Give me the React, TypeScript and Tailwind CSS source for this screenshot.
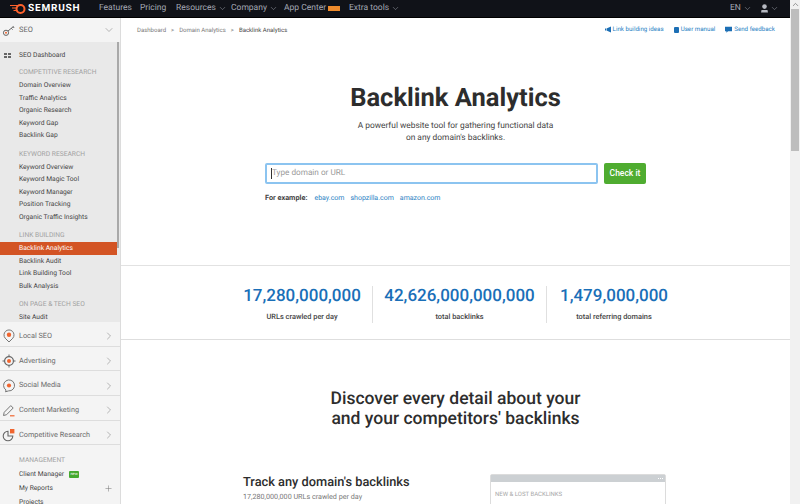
import { ChevronDown, ChevronRight, ChevronUp, Plus } from "lucide-react";

const font = "font-['Roboto','Noto_Sans',sans-serif]";

const groups = [
  {
    title: "COMPETITIVE RESEARCH",
    items: ["Domain Overview", "Traffic Analytics", "Organic Research", "Keyword Gap", "Backlink Gap"],
  },
  {
    title: "KEYWORD RESEARCH",
    items: ["Keyword Overview", "Keyword Magic Tool", "Keyword Manager", "Position Tracking", "Organic Traffic Insights"],
  },
  {
    title: "LINK BUILDING",
    items: ["Backlink Analytics", "Backlink Audit", "Link Building Tool", "Bulk Analysis"],
  },
  { title: "ON PAGE & TECH SEO", items: ["Site Audit"] },
];

function PinIcon() {
  return (
    <svg width="14" height="14" viewBox="0 0 14 14" fill="none">
      <path d="M7 13 3.2 9.2a5 5 0 1 1 7.6 0Z" stroke="#777" strokeWidth="1" />
      <circle cx="7" cy="5.8" r="2.2" fill="#f0652f" />
    </svg>
  );
}

function TargetIcon() {
  return (
    <svg width="14" height="14" viewBox="0 0 14 14" fill="none">
      <circle cx="7" cy="7" r="4.4" stroke="#666" strokeWidth="1.2" />
      <circle cx="7" cy="7" r="2" fill="#f0652f" />
      <path d="M7 .5v2M7 11.5v2M.5 7h2M11.5 7h2" stroke="#666" />
    </svg>
  );
}

function BubbleIcon() {
  return (
    <svg width="14" height="14" viewBox="0 0 14 14" fill="none">
      <path d="M3.5 12.8 4 11a5.5 5.5 0 1 1 2.5.9Z" stroke="#777" />
      <circle cx="7" cy="6.5" r="2.1" fill="#f0652f" />
    </svg>
  );
}

function PenIcon() {
  return (
    <svg width="14" height="14" viewBox="0 0 14 14" fill="none">
      <path d="M1.5 12.5 2.2 9.3 8.8 2.6l2.4 2.4-6.6 6.7Z" stroke="#777" />
      <path d="M8 12.8h4.5" stroke="#f0652f" strokeWidth="1.2" />
    </svg>
  );
}

function PieIcon() {
  return (
    <svg width="14" height="14" viewBox="0 0 14 14" fill="none">
      <path d="M6 3.2a4.8 4.8 0 1 0 4.8 4.8H6Z" stroke="#666" strokeWidth="1.1" />
      <path d="M8 1h4.4v4.4H8Z" fill="#f0652f" />
    </svg>
  );
}

function KeyIcon() {
  return (
    <svg width="14" height="14" viewBox="0 0 14 14" fill="none">
      <circle cx="4" cy="9.8" r="2.6" stroke="#666" />
      <circle cx="4" cy="9.8" r="1" fill="#f0652f" />
      <path d="m6 8 5.6-4.6M9.2 5.2l1.4 1.4M11 3.7l1.2 1.3" stroke="#666" />
    </svg>
  );
}

const sections = [
  { label: "Local SEO", icon: <PinIcon /> },
  { label: "Advertising", icon: <TargetIcon /> },
  { label: "Social Media", icon: <BubbleIcon /> },
  { label: "Content Marketing", icon: <PenIcon /> },
  { label: "Competitive Research", icon: <PieIcon /> },
];

const stats = [
  { value: "17,280,000,000", label: "URLs crawled per day", width: "w-[140px]" },
  { value: "42,626,000,000,000", label: "total backlinks", width: "w-[175px] border-x border-[#e0e0e0]" },
  { value: "1,479,000,000", label: "total referring domains", width: "w-[134px]" },
];

function Sidebar() {
  return (
    <aside className="flex h-[486px] w-[121px] shrink-0 flex-col overflow-hidden border-r border-[#dcdcdc] bg-[#f4f4f4] text-[6.7px] text-[#555]">
      <div className="flex h-6 shrink-0 items-center pl-[2px] pr-[5px] text-[7.5px] text-[#666]">
        <KeyIcon />
        <span className="ml-[3px]">SEO</span>
        <ChevronDown className="ml-auto text-[#888]" size={12} strokeWidth={1.2} />
      </div>
      <div className="relative h-[280px] shrink-0 overflow-hidden bg-[#e9e9e9] pr-[3px]">
        <div className="flex h-[24px] items-center pl-1 pt-[3px] text-[#444]">
          <span className="grid w-[15px] grid-cols-[3px_3px] gap-[1px]">
            <i className="h-[2px] bg-[#666]" />
            <i className="h-[2px] bg-[#666]" />
            <i className="h-[2px] bg-[#666]" />
            <i className="h-[2px] bg-[#666]" />
          </span>
          SEO Dashboard
        </div>
        {groups.map((group) => (
          <div key={group.title} className="mb-[6px]">
            <div className="flex h-[13px] items-center pl-[19px] text-[#a2a2a2]">{group.title}</div>
            {group.items.map((item) => (
              <div
                key={item}
                className={`flex h-[12.5px] items-center pl-[19px] ${
                  item === "Backlink Analytics" ? "bg-[#d35424] text-white" : "text-[#444]"
                }`}
              >
                {item}
              </div>
            ))}
          </div>
        ))}
        <div className="absolute right-[1px] top-0 h-[206px] w-[2px] bg-[#a9a9a9]" />
      </div>
      {sections.map((section) => (
        <div key={section.label} className="flex h-[24.7px] shrink-0 items-center border-b border-[#dddddd] pl-[1px] pr-[5px] pt-[5px] text-[7.3px] text-[#6b6b6b]">
          <span className="w-[18px] pl-[1px]">{section.icon}</span>
          {section.label}
          <ChevronRight className="ml-auto text-[#888]" size={12} strokeWidth={1.2} />
        </div>
      ))}
      <div className="mt-[8px] flex h-[14px] shrink-0 items-center pl-[19px] text-[#a2a2a2]">MANAGEMENT</div>
      <div className="flex h-[14px] shrink-0 items-center gap-[5px] pl-[19px] text-[#444]">
        Client Manager
        <span className="flex h-[7px] w-[10px] items-center justify-center rounded-[1px] bg-[#45a92f] text-[4px] text-white">new</span>
      </div>
      <div className="flex h-[14px] shrink-0 items-center justify-between pl-[19px] pr-[7px] text-[#444]">
        My Reports
        <Plus className="text-[#777]" size={9} strokeWidth={1.4} />
      </div>
      <div className="flex h-[14px] shrink-0 items-center pl-[19px] text-[#444]">Projects</div>
    </aside>
  );
}

function TopBar() {
  return (
    <header className="flex h-[18px] w-[790px] shrink-0 items-center border-b border-black bg-[#101218] pl-[10px] text-[8.5px] text-[#a5a9b5]">
      <svg width="16" height="10" viewBox="0 0 16 10" className="shrink-0">
        <path d="M0 1.5h8M2 4h5M3.5 6.5h4" stroke="#ff622d" strokeWidth="1.2" />
        <circle cx="10.5" cy="5" r="4" fill="none" stroke="#ff622d" strokeWidth="2" />
      </svg>
      <span className="ml-[2px] w-[71px] text-[10px] font-bold tracking-[0.8px] text-white">SEMRUSH</span>
      <span className="w-[41px]">Features</span>
      <span className="w-[36px]">Pricing</span>
      <span className="flex w-[55px] items-center">Resources<ChevronDown size={9} strokeWidth={1.3} className="ml-[2px]" /></span>
      <span className="flex w-[53px] items-center">Company<ChevronDown size={9} strokeWidth={1.3} className="ml-[2px]" /></span>
      <span className="flex w-[65px] items-center">App Center<i className="ml-[2px] h-[5px] w-[12px] bg-[#ee8b2c]" /></span>
      <span className="flex items-center">Extra tools<ChevronDown size={9} strokeWidth={1.3} className="ml-[2px]" /></span>
      <span className="ml-auto flex w-[30px] items-center">EN<ChevronDown size={9} strokeWidth={1.3} className="ml-[2px]" /></span>
      <span className="mr-[11px] flex items-center">
        <svg width="9" height="9" viewBox="0 0 9 9" fill="#b5b8c0">
          <circle cx="4.5" cy="2.6" r="2.3" />
          <path d="M1 8.5 1.5 6h6L8 8.5Z" />
        </svg>
        <ChevronDown size={9} strokeWidth={1.3} className="ml-[1px]" />
      </span>
    </header>
  );
}

function Main() {
  return (
    <main className="flex min-w-0 flex-1 flex-col overflow-hidden bg-white">
      <div className="flex h-6 shrink-0 items-center justify-between pl-4 pr-[15px]">
        <div className="flex items-center gap-[5px] text-[6px] text-[#777]">
          <span>Dashboard</span>
          <span>&gt;</span>
          <span>Domain Analytics</span>
          <span>&gt;</span>
          <span className="text-[#444]">Backlink Analytics</span>
        </div>
        <div className="flex items-center gap-[10px] text-[6.2px] text-[#2a82c4]">
          <span className="flex items-center gap-[1px]">
            <svg width="7" height="7" viewBox="0 0 7 7" fill="#1c6fb5"><path d="M0 2.5h1v2H0Zm1.5 0L6 .5v6L1.5 4.5Z" /></svg>
            Link building ideas
          </span>
          <span className="flex items-center gap-[2px]">
            <i className="h-[6px] w-[5px] rounded-[1px] bg-[#1c6fb5]" />
            User manual
          </span>
          <span className="flex items-center gap-[2px]">
            <svg width="7" height="7" viewBox="0 0 7 7" fill="#1c6fb5"><path d="M0 .8h7v4.4H3L1.4 6.8V5.2H0Z" /></svg>
            Send feedback
          </span>
        </div>
      </div>

      <section className="flex h-[224px] shrink-0 flex-col items-center border-b border-[#e2e2e2] pt-[39px]">
        <h1 className="text-[25.5px] font-bold leading-[34px] text-[#2d2d2d]">Backlink Analytics</h1>
        <p className="mt-[5px] text-center text-[8.4px] leading-[12px] text-[#444]">
          A powerful website tool for gathering functional data
          <br />
          on any domain's backlinks.
        </p>
        <div className="mt-[19px] flex w-[381px] gap-[6px]">
          <div className="flex h-[21px] flex-1 items-center rounded-[2px] border-2 border-[#8cc4f0] pl-[4px] text-[8.2px] text-[#999]">
            <i className="h-[11px] w-px bg-[#333]" />
            Type domain or URL
          </div>
          <button type="button" className="h-[21px] w-[42px] rounded-[2px] bg-[#4fac30] text-[8.5px] font-medium text-white">Check it</button>
        </div>
        <div className="mt-[9px] flex w-[381px] gap-[6px] text-[7px] text-[#2a82c4]">
          <span className="mr-[1px] text-[7.3px] font-bold text-[#444]">For example:</span>
          <span>ebay.com</span>
          <span>shopzilla.com</span>
          <span>amazon.com</span>
        </div>
      </section>

      <section className="flex h-[74px] shrink-0 items-start justify-center border-b border-[#dedede] pl-[2px] pt-5">
        {stats.map((stat) => (
          <div key={stat.label} className={`flex h-[37px] flex-col items-center ${stat.width}`}>
            <span className="text-[17px] font-medium leading-5 text-[#1a6fb8]">{stat.value}</span>
            <span className="mt-[6px] text-[7.4px] font-medium leading-[10px] text-[#444]">{stat.label}</span>
          </div>
        ))}
      </section>

      <h2 className="mt-[49px] shrink-0 text-center text-[17.5px] font-medium leading-[20px] text-[#2d2d2d]">
        Discover every detail about your
        <br />
        and your competitors' backlinks
      </h2>

      <section className="mt-[45px] flex shrink-0 pl-[122px]">
        <div className="w-[247px] pt-[2px]">
          <h3 className="text-[12.8px] font-medium leading-[14px] text-[#2d2d2d]">Track any domain's backlinks</h3>
          <p className="mt-[2px] text-[7.2px] leading-[10px] text-[#777]">17,280,000,000 URLs crawled per day</p>
        </div>
        <div className="h-[60px] w-[176px] rounded-[2px] border border-[#dcdcdc]">
          <div className="flex h-[7px] items-center justify-end gap-px bg-[#ccd0d3] pr-[2px]">
            <i className="size-px bg-white" />
            <i className="size-px bg-white" />
            <i className="size-px bg-white" />
          </div>
          <div className="pl-[4px] pt-[9px] text-[6px] leading-[8px] text-[#a8a8a8]">NEW &amp; LOST BACKLINKS</div>
        </div>
      </section>
    </main>
  );
}

export default function App() {
  return (
    <div className={`flex h-[504px] w-[800px] overflow-hidden bg-white [text-rendering:geometricPrecision] ${font}`}>
      <div className="flex min-w-0 flex-1 flex-col">
        <TopBar />
        <div className="flex min-h-0 flex-1">
          <Sidebar />
          <Main />
        </div>
      </div>
      <div className="flex w-[10px] shrink-0 flex-col items-center bg-[#f1f1f1]">
        <ChevronUp className="text-[#777]" size={9} strokeWidth={2} />
        <div className="h-[142px] w-2 bg-[#bdbdbd]" />
      </div>
    </div>
  );
}
